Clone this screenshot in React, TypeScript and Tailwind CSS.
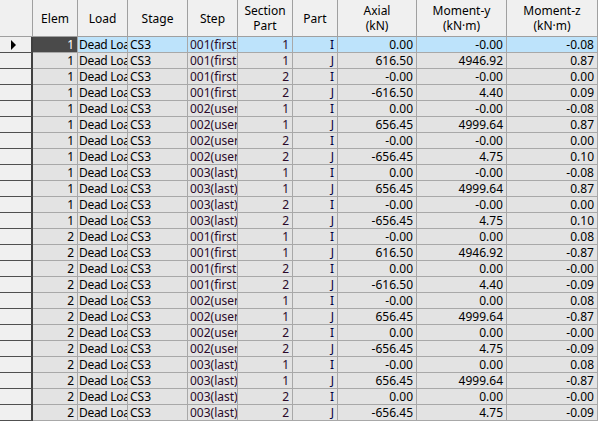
import React from "react";

const W = [33, 45, 50, 60, 50, 55, 45, 79, 90, 91];
const rows: string[][] = [
  ["1","001(first)","1","I","0.00","-0.00","-0.08"],
  ["1","001(first)","1","J","616.50","4946.92","0.87"],
  ["1","001(first)","2","I","-0.00","-0.00","0.00"],
  ["1","001(first)","2","J","-616.50","4.40","0.09"],
  ["1","002(user","1","I","0.00","-0.00","-0.08"],
  ["1","002(user","1","J","656.45","4999.64","0.87"],
  ["1","002(user","2","I","-0.00","-0.00","0.00"],
  ["1","002(user","2","J","-656.45","4.75","0.10"],
  ["1","003(last)","1","I","0.00","-0.00","-0.08"],
  ["1","003(last)","1","J","656.45","4999.64","0.87"],
  ["1","003(last)","2","I","-0.00","-0.00","0.00"],
  ["1","003(last)","2","J","-656.45","4.75","0.10"],
  ["2","001(first)","1","I","-0.00","0.00","0.08"],
  ["2","001(first)","1","J","616.50","4946.92","-0.87"],
  ["2","001(first)","2","I","0.00","0.00","-0.00"],
  ["2","001(first)","2","J","-616.50","4.40","-0.09"],
  ["2","002(user","1","I","-0.00","0.00","0.08"],
  ["2","002(user","1","J","656.45","4999.64","-0.87"],
  ["2","002(user","2","I","0.00","0.00","-0.00"],
  ["2","002(user","2","J","-656.45","4.75","-0.09"],
  ["2","003(last)","1","I","-0.00","0.00","0.08"],
  ["2","003(last)","1","J","656.45","4999.64","-0.87"],
  ["2","003(last)","2","I","0.00","0.00","-0.00"],
  ["2","003(last)","2","J","-656.45","4.75","-0.09"],
];

const heads = ["", "Elem", "Load", "Stage", "Step", "Section\nPart", "Part", "Axial\n(kN)", "Moment-y\n(kN·m)", "Moment-z\n(kN·m)"];

export default function App() {
  return (
    <div className="w-[598px] h-[422px] overflow-hidden bg-white text-[12px] leading-none text-black font-['Liberation_Sans',Arial,sans-serif]">
      <div className="flex h-[37px]">
        {heads.map((h, i) => (
          <div key={i} style={{ width: W[i] }} className="shrink-0 flex items-center justify-center text-center whitespace-pre leading-[15px] bg-[#f0f0f0] border-r border-b border-[#a0a0a0]">
            {h}
          </div>
        ))}
      </div>
      {rows.map((r, ri) => {
        const sel = ri === 0;
        const bg = sel ? "bg-[#bde3fb]" : "bg-[#e3e3e3]";
        const cells = [r[0], "Dead Loa", "CS3", r[1], r[2], r[3], r[4], r[5], r[6]];
        return (
          <div key={ri} className="flex h-[16px]">
            <div style={{ width: W[0] }} className="shrink-0 bg-[#f0f0f0] border-r-2 border-b border-[#505050] border-r-[#404040] flex items-center pl-[11px]">
              {sel && <div className="w-0 h-0 border-y-[5px] border-y-transparent border-l-[5px] border-l-black" />}
            </div>
            {cells.map((c, ci) => {
              const align = ci === 1 ? "justify-start pl-[1px] tracking-[-0.3px]" : ci === 2 || ci === 3 ? "justify-start pl-[2px]" : "justify-end pr-[3px]";
              const color = ci === 3 || ci === 4 ? "text-[#2a0a2a]" : ci === 5 ? "text-[#000040]" : "text-black";
              const selElem = sel && ci === 0;
              return (
                <div key={ci} style={{ width: W[ci + 1] }} className={`shrink-0 flex items-center overflow-hidden whitespace-nowrap border-r border-b border-[#a8a8a8] ${align} ${selElem ? "bg-[#4a4a4a] text-white" : `${bg} ${color}`}`}>
                  {c}
                </div>
              );
            })}
          </div>
        );
      })}
    </div>
  );
}
